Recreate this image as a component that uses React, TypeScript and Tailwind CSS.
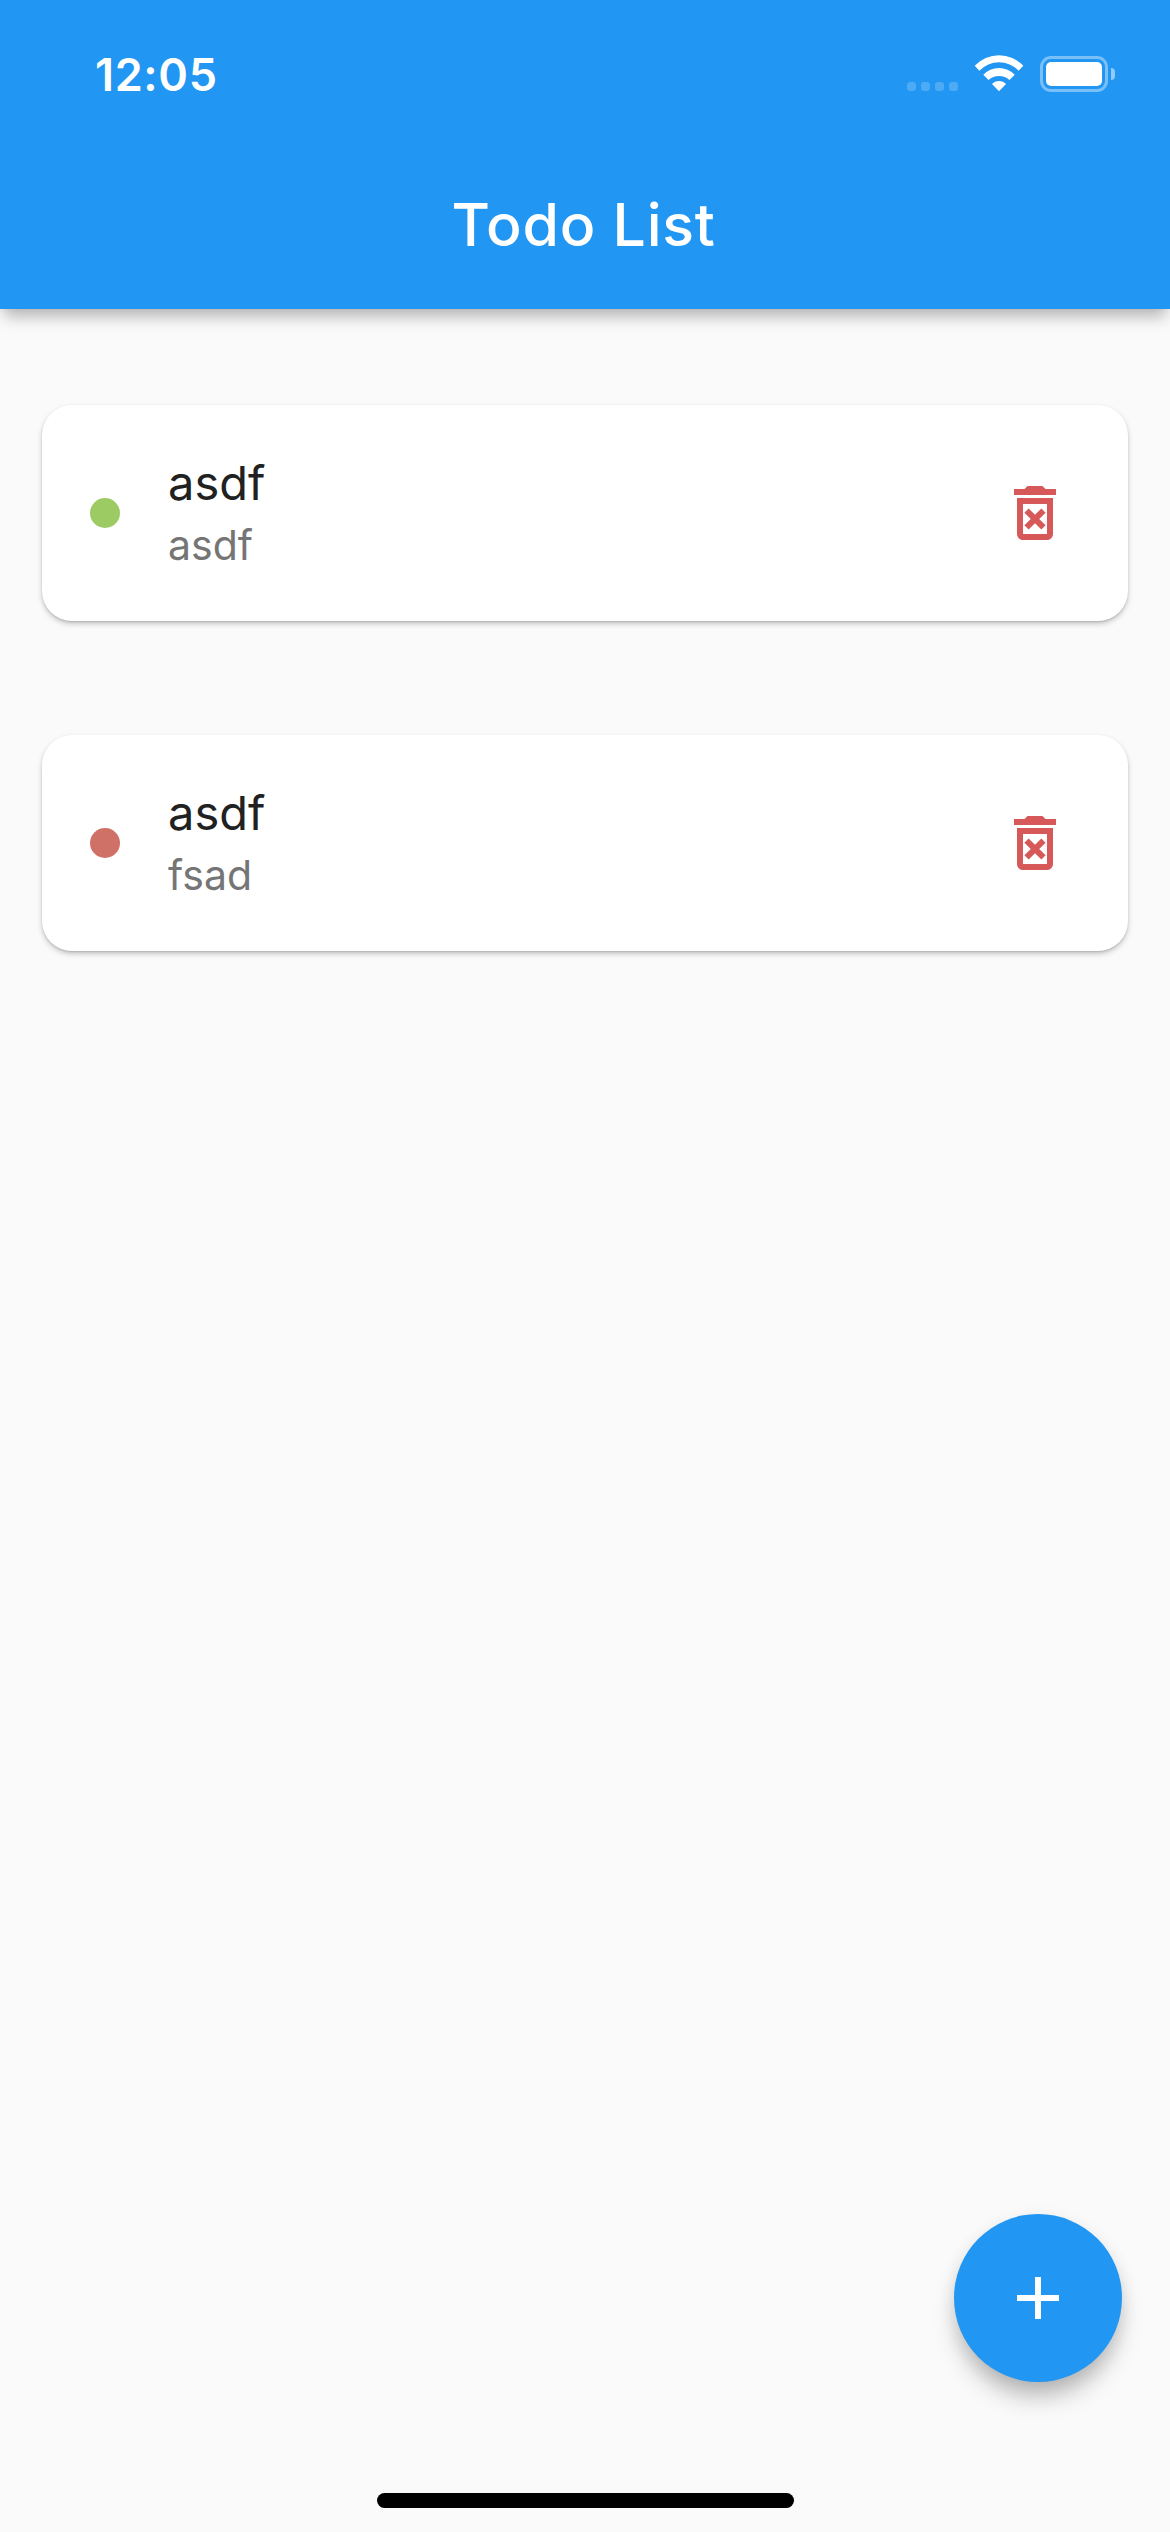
type Todo = { title: string; detail: string; done: boolean };

const todos: Todo[] = [
  { title: "asdf", detail: "asdf", done: true },
  { title: "asdf", detail: "fsad", done: false },
];

function StatusBar() {
  return (
    <div className="flex h-[141px] items-start justify-between pr-[55px] pl-[95px]">
      <span className="mt-[48px] text-[45px] leading-[54px] font-semibold tracking-[0.65px]">12:05</span>
      <div className="mt-[55px] flex h-[37px] items-start">
        <div className="mt-[27px] flex gap-[5px]">
          {[0, 1, 2, 3].map((i) => (
            <span key={i} className="size-[9px] rounded-[3px] bg-white/20" />
          ))}
        </div>
        <svg className="ml-[16px] h-[37px] w-[50px]" viewBox="974 55 50 37" fill="currentColor">
          <path d="M974.7 65.7A33.5 33.5 0 0 1 1023.3 65.7L1018.6 70.7A27 27 0 0 0 979.4 70.7Z" />
          <path d="M983.3 74.7A21.5 21.5 0 0 1 1014.7 74.7L1009.5 80A15.5 15.5 0 0 0 988.5 80Z" />
          <path d="M992 84A9.5 9.5 0 0 1 1006 84L999 91.2Z" />
        </svg>
        <div className="mt-px ml-[16px] flex items-center gap-[3px]">
          <div className="h-[36px] w-[68px] rounded-[11px] border-[3px] border-white/40 p-[3px]">
            <div className="h-full w-full rounded-[5px] bg-white" />
          </div>
          <span className="h-[12px] w-[4px] rounded-r-full bg-white/50" />
        </div>
      </div>
    </div>
  );
}

function DeleteIcon() {
  return (
    <svg className="size-[72px]" viewBox="0 0 24 24" fill="currentColor">
      <path d="M14.12 10.47 12 12.59l-2.13-2.12-1.41 1.41L10.59 14l-2.12 2.12 1.41 1.41L12 15.41l2.12 2.12 1.41-1.41L13.41 14l2.12-2.12zM15.5 4l-1-1h-5l-1 1H5v2h14V4zM6 19c0 1.1.9 2 2 2h8c1.1 0 2-.9 2-2V7H6zM8 9h8v10H8z" />
    </svg>
  );
}

function TodoCard({ todo }: { todo: Todo }) {
  return (
    <li className="flex h-[216px] items-center rounded-[30px] bg-white pr-[57px] pl-[48px] shadow-[0_3px_6px_-1px_rgba(0,0,0,0.27),0_1px_2px_rgba(0,0,0,0.12)]">
      <span className={`size-[30px] rounded-full ${todo.done ? "bg-[#9ccb64]" : "bg-[#cf7167]"}`} />
      <div className="ml-[48px] flex flex-1 flex-col">
        <span className="text-[47px] leading-[60px] text-[#212121]">{todo.title}</span>
        <span className="mt-[3px] text-[41px] leading-[58px] text-[#757575]">{todo.detail}</span>
      </div>
      <button className="text-[#d65859]" aria-label="Delete">
        <DeleteIcon />
      </button>
    </li>
  );
}

export default function App() {
  return (
    <div className="relative flex h-[2532px] w-[1170px] flex-col overflow-hidden bg-[#fafafa] font-['Inter',sans-serif]">
      <header className="h-[309px] bg-[#2196f3] text-white shadow-[0_12px_14px_-4px_rgba(0,0,0,0.26),0_0_6px_rgba(0,0,0,0.06)]">
        <StatusBar />
        <div className="flex h-[168px] items-center justify-center pr-[3px]">
          <h1 className="text-[59px] leading-[72px] font-medium tracking-[0.75px]">Todo List</h1>
        </div>
      </header>
      <ul className="mt-[96px] flex flex-col gap-[114px] px-[42px]">
        {todos.map((todo, i) => (
          <TodoCard key={i} todo={todo} />
        ))}
      </ul>
      <button
        aria-label="Add"
        className="absolute right-[48px] bottom-[150px] flex size-[168px] items-center justify-center rounded-full bg-[#2196f3] text-white shadow-[0_18px_24px_-4px_rgba(0,0,0,0.26),0_4px_18px_rgba(0,0,0,0.07)]"
      >
        <svg className="size-[72px]" viewBox="0 0 24 24" fill="currentColor">
          <path d="M19 13h-6v6h-2v-6H5v-2h6V5h2v6h6z" />
        </svg>
      </button>
      <div className="absolute bottom-[24px] left-[377px] h-[15px] w-[417px] rounded-full bg-black" />
    </div>
  );
}
